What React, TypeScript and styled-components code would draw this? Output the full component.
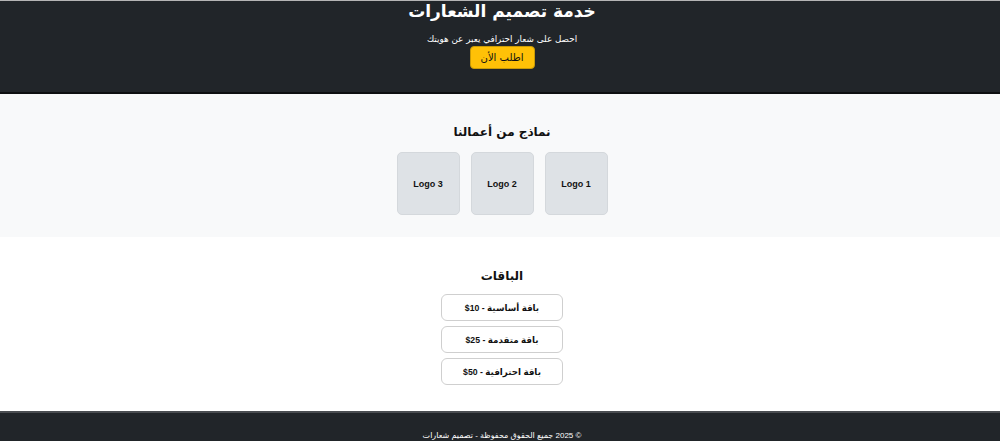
import * as React from 'react';
import styled, { createGlobalStyle } from 'styled-components';

const GlobalStyle = createGlobalStyle`
  html, body {
    margin: 0;
    padding: 0;
    background: #ffffff;
    font-family: 'Liberation Sans', 'DejaVu Sans', sans-serif;
  }
`;

const Page = styled.div`
  direction: rtl;
  display: flex;
  flex-direction: column;
  border-top: 1px solid #b5b5b5;
`;

const Hero = styled.header`
  background: #212529;
  color: #fff;
  display: flex;
  flex-direction: column;
  align-items: center;
  padding: 0 0 23px 4px;
  border-bottom: 2px solid #0e0f11;
`;

const HeroTitle = styled.h1`
  margin: -1px 0 0;
  font-family: 'DejaVu Sans', sans-serif;
  font-size: 17px;
  line-height: 22px;
  font-weight: 700;
`;

const HeroText = styled.p`
  margin: 12px 0 0;
  font-family: 'DejaVu Sans', sans-serif;
  font-size: 8.8px;
  line-height: 11px;
`;

const OrderButton = styled.button`
  margin-top: 1px;
  width: 65px;
  height: 23px;
  padding: 0;
  background: #ffc107;
  color: #111;
  border: 1px solid #c99a06;
  border-radius: 4px;
  font-family: 'DejaVu Sans', sans-serif;
  font-size: 10px;
  cursor: pointer;
`;

const Section = styled.section<{ $bg: string; $pad: string }>`
  background: ${(p) => p.$bg};
  padding: ${(p) => p.$pad};
  padding-left: 4px;
  display: flex;
  flex-direction: column;
  align-items: center;
`;

const SectionTitle = styled.h2`
  margin: 0;
  font-family: 'DejaVu Sans', sans-serif;
  font-size: 12px;
  line-height: 20px;
  font-weight: 700;
  color: #111;
`;

const LogoRow = styled.div`
  margin-top: 10px;
  display: flex;
  gap: 11px;
`;

const LogoBox = styled.div`
  width: 61px;
  height: 61px;
  background: #dee2e6;
  border: 1px solid #d4d8dc;
  border-radius: 5px;
  display: flex;
  align-items: center;
  justify-content: center;
  font-size: 9px;
  font-weight: 700;
  color: #111;
  direction: ltr;
`;

const PlanList = styled.div`
  margin-top: 8px;
  display: flex;
  flex-direction: column;
  gap: 5px;
`;

const PlanCard = styled.div`
  width: 120px;
  height: 25px;
  border: 1px solid #cfcfcf;
  border-radius: 6px;
  background: #fff;
  display: flex;
  align-items: center;
  justify-content: center;
  font-size: 8.7px;
  font-weight: 700;
  color: #111;
`;

const Footer = styled.footer`
  background: #212529;
  color: #fff;
  border-top: 2px solid #4a4d51;
  padding: 17px 0 6px 4px;
  text-align: center;
  font-size: 8px;
  line-height: 12px;
`;

const plans = ['باقة أساسية - 10$', 'باقة متقدمة - 25$', 'باقة احترافية - 50$'];

export default function App() {
  return (
    <>
      <GlobalStyle />
      <Page>
        <Hero>
          <HeroTitle>خدمة تصميم الشعارات</HeroTitle>
          <HeroText>احصل على شعار احترافي يعبر عن هويتك</HeroText>
          <OrderButton>اطلب الأن</OrderButton>
        </Hero>
        <Section $bg="#f8f9fa" $pad="28px 0 22px">
          <SectionTitle>نماذج من أعمالنا</SectionTitle>
          <LogoRow>
            <LogoBox>Logo 1</LogoBox>
            <LogoBox>Logo 2</LogoBox>
            <LogoBox>Logo 3</LogoBox>
          </LogoRow>
        </Section>
        <Section $bg="#ffffff" $pad="29px 0 26px">
          <SectionTitle>الباقات</SectionTitle>
          <PlanList>
            {plans.map((p) => (
              <PlanCard key={p}>{p}</PlanCard>
            ))}
          </PlanList>
        </Section>
        <Footer>© 2025 جميع الحقوق محفوظة - تصميم شعارات</Footer>
      </Page>
    </>
  );
}
